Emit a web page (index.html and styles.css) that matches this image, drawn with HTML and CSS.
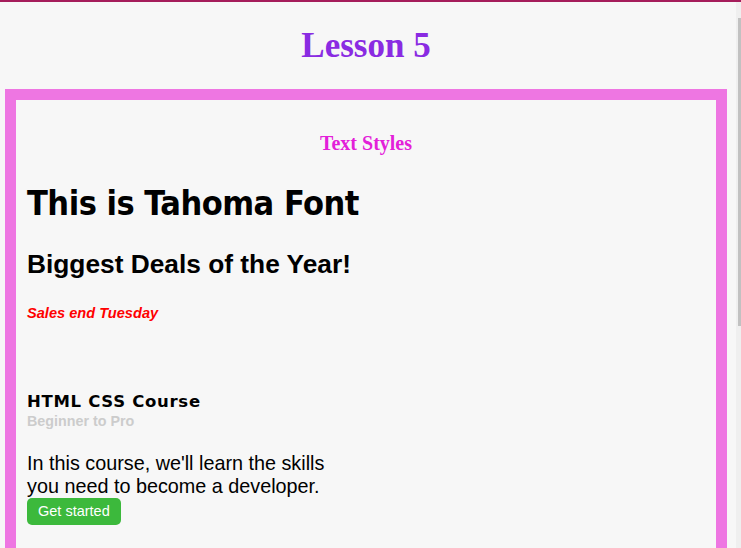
FILE: index.html
```html
<!DOCTYPE html>
<html lang="en">
<head>
<meta charset="utf-8">
<title>Lesson 5</title>
<link rel="stylesheet" href="styles.css">
</head>
<body>
<div class="frame">
  <main class="page">
    <h1 class="lesson-title">Lesson 5</h1>
    <section class="lesson-box">
      <h3 class="section-title">Text Styles</h3>
      <h1 class="tahoma-heading">This is Tahoma Font</h1>
      <h2 class="deals">Biggest Deals of the Year!</h2>
      <p class="sales">Sales end Tuesday</p>
      <div class="course">
        <h3 class="course-title">HTML CSS Course</h3>
        <p class="course-sub">Beginner to Pro</p>
        <p class="course-desc">In this course, we'll learn the skills you need to become a developer.</p>
        <button class="btn-start" type="button">Get started</button>
      </div>
    </section>
  </main>
  <div class="scrollbar"><div class="scrollbar-thumb"></div></div>
</div>
</body>
</html>
```

FILE: styles.css
```css
html, body {
  margin: 0;
  padding: 0;
  height: 548px;
  overflow: hidden;
}

body {
  background: #f7f7f7;
  border-top: 2px solid #a51d5b;
  box-sizing: border-box;
}

.frame {
  display: flex;
  height: 546px;
}

.page {
  flex: 1;
  padding: 0 9px 0 5px;
  overflow: hidden;
}

.lesson-title {
  margin: 24px 0 23px;
  font-family: "Liberation Serif", "Times New Roman", serif;
  font-weight: bold;
  font-size: 35px;
  line-height: 40px;
  color: #8a2be2;
  text-align: center;
}

.lesson-box {
  border: 11px solid #ee76e2;
  padding: 31px 11px 60px;
  background: #f7f7f7;
}

.section-title {
  margin: 0;
  font-family: "Liberation Serif", "Times New Roman", serif;
  font-weight: bold;
  font-size: 20px;
  line-height: 24px;
  color: #e320d9;
  text-align: center;
}

.tahoma-heading {
  margin: 28px 0 0;
  font-family: Tahoma, "DejaVu Sans Condensed", "DejaVu Sans", sans-serif;
  font-stretch: condensed;
  font-weight: bold;
  font-size: 34px;
  line-height: 40px;
  letter-spacing: -0.5px;
  color: #000;
}

.deals {
  margin: 26px 0 0;
  font-family: "Liberation Sans", Arial, sans-serif;
  font-weight: bold;
  font-size: 26.3px;
  line-height: 30px;
  color: #000;
}

.sales {
  margin: 26px 0 0;
  font-family: "Liberation Sans", Arial, sans-serif;
  font-weight: bold;
  font-style: italic;
  font-size: 14.6px;
  line-height: 17px;
  color: #ff0000;
}

.course {
  margin-top: 70px;
}

.course-title {
  margin: 0;
  font-family: Tahoma, "DejaVu Sans", sans-serif;
  font-weight: bold;
  font-size: 16.5px;
  line-height: 20px;
  letter-spacing: 0.7px;
  color: #000;
}

.course-sub {
  margin: 1px 0 0;
  font-family: "Liberation Sans", Arial, sans-serif;
  font-weight: bold;
  font-size: 14.3px;
  line-height: 16px;
  color: #cccccc;
}

.course-desc {
  width: 320px;
  margin: 23px 0 0;
  font-family: "Liberation Sans", Arial, sans-serif;
  font-size: 19.8px;
  line-height: 23px;
  color: #000;
}

.btn-start {
  display: block;
  margin: 0;
  height: 27px;
  padding: 0 11px;
  border: none;
  border-radius: 5px;
  background: #3cb93c;
  color: #fff;
  font-family: "Liberation Sans", Arial, sans-serif;
  font-size: 14.5px;
  line-height: 27px;
  cursor: pointer;
}

.scrollbar {
  width: 5px;
  background: #efefef;
  display: flex;
  justify-content: flex-end;
  align-items: flex-start;
}

.scrollbar-thumb {
  width: 3px;
  height: 308px;
  margin-top: 16px;
  background: #c1c1c1;
}
```
